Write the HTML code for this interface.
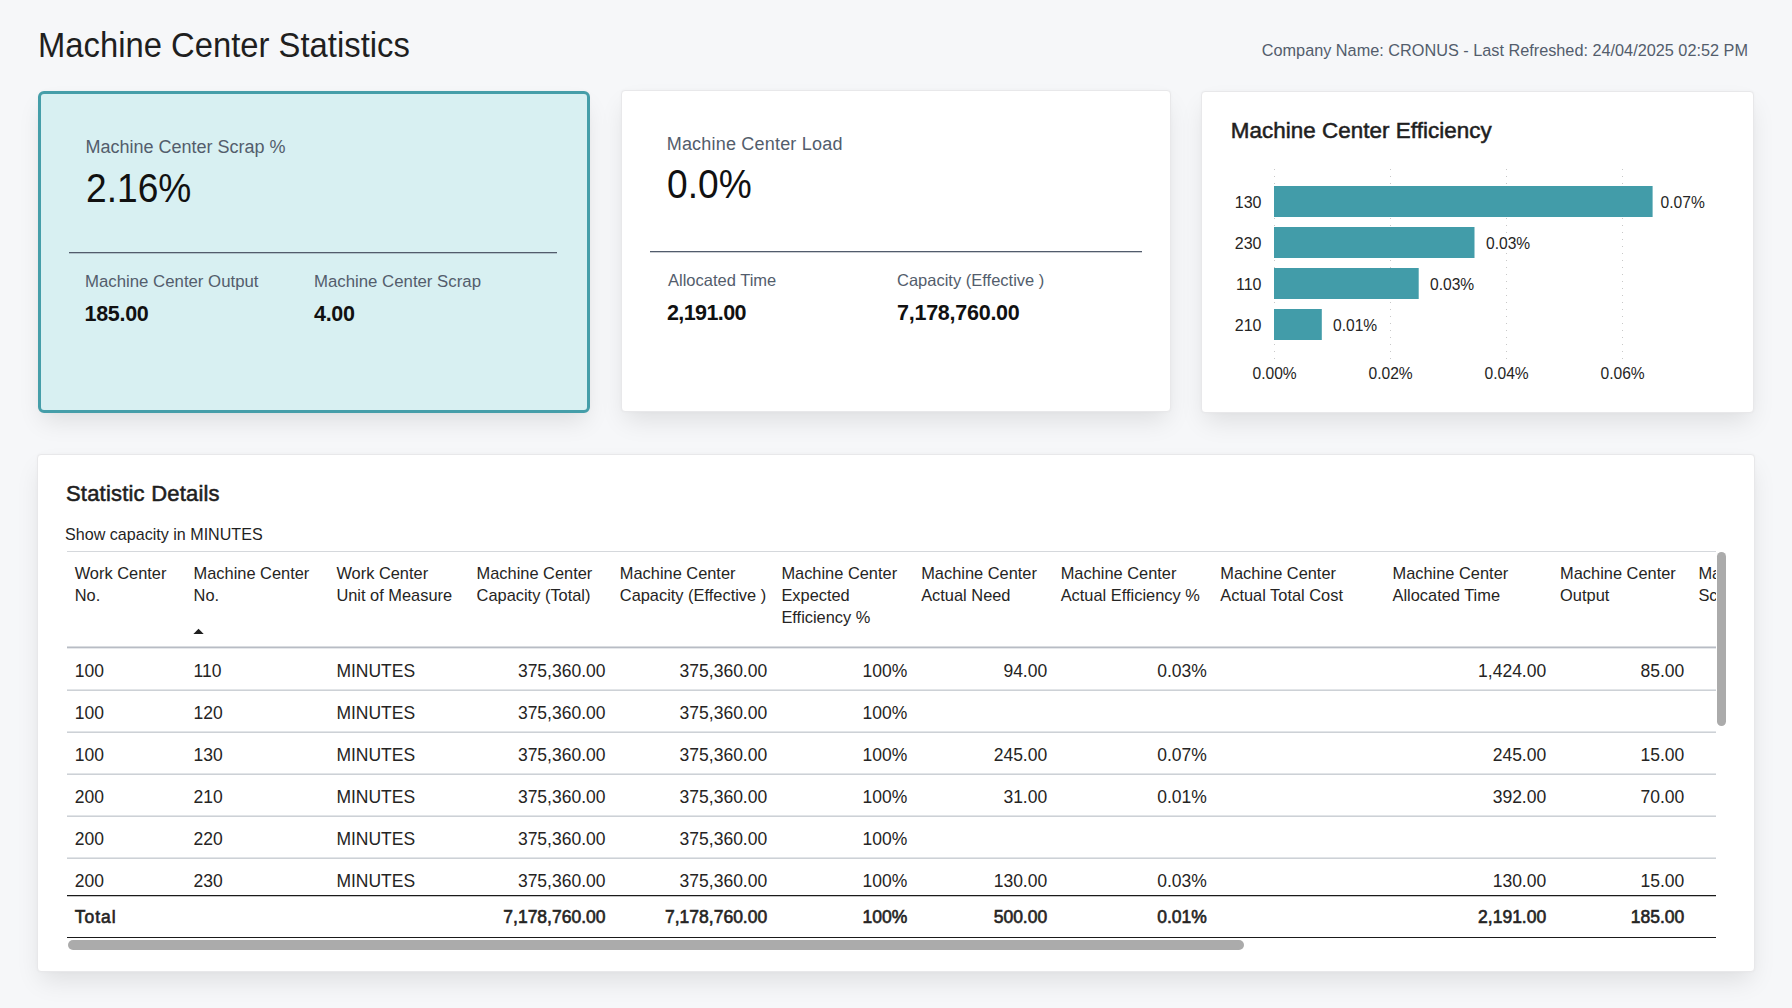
<!DOCTYPE html>
<html><head><meta charset="utf-8">
<style>
html,body{margin:0;padding:0;}
body{width:1792px;height:1008px;overflow:hidden;background:#f6f7f9;font-family:"Liberation Sans",sans-serif;position:relative;color:#252423;}
.a{position:absolute;white-space:nowrap;line-height:1;}
.card{position:absolute;background:#fff;border-radius:4px;box-shadow:0 12px 24px -4px rgba(0,0,0,0.1),0 0 3px rgba(0,0,0,0.03);border:1px solid #e8e8ea;box-sizing:border-box;}
.lbl{color:#535d6c;}
.b{font-weight:bold;}
.tb{-webkit-text-stroke:0.6px currentColor;}
.sb{-webkit-text-stroke:0.55px currentColor;}
.kv{font-weight:bold;font-size:21.5px;letter-spacing:-0.6px;color:#111;}
.line{position:absolute;}
.th{font-size:16.4px;color:#252423;}
.td{font-size:17.5px;color:#252423;}
</style></head>
<body>
<!-- header -->
<div class="a" style="left:38.2px;top:27.2px;font-size:35px;color:#1f1f1f;transform:scaleX(0.937);transform-origin:0 0;">Machine Center Statistics</div>
<div class="a lbl" style="right:44px;top:42.3px;font-size:17.2px;transform:scaleX(0.946);transform-origin:100% 0;">Company Name: CRONUS - Last Refreshed: 24/04/2025 02:52 PM</div>

<!-- card 1 -->
<div class="card" style="left:38px;top:91px;width:552px;height:322px;background:#d8f0f2;border:3px solid #459ea9;border-radius:6px;"></div>
<div class="a lbl" style="left:85.4px;top:137.5px;font-size:18px;">Machine Center Scrap %</div>
<div class="a" style="left:86px;top:167.9px;font-size:40.5px;color:#111;transform:scaleX(0.917);transform-origin:0 0;">2.16%</div>
<div class="line" style="left:69px;top:252px;width:488px;height:1px;background:#525c6c;box-shadow:0 1px 0 rgba(82,92,108,0.3);"></div>
<div class="a lbl" style="left:85px;top:273.5px;font-size:16.8px;">Machine Center Output</div>
<div class="a kv" style="left:84.5px;top:304.4px;letter-spacing:-0.3px;">185.00</div>
<div class="a lbl" style="left:314px;top:273.5px;font-size:16.8px;">Machine Center Scrap</div>
<div class="a kv" style="left:314px;top:304.4px;letter-spacing:-0.3px;">4.00</div>

<!-- card 2 -->
<div class="card" style="left:621px;top:90px;width:550px;height:322px;"></div>
<div class="a lbl" style="left:666.7px;top:134.8px;font-size:18px;letter-spacing:0.2px;">Machine Center Load</div>
<div class="a" style="left:666.5px;top:164.4px;font-size:40.5px;color:#111;transform:scaleX(0.917);transform-origin:0 0;">0.0%</div>
<div class="line" style="left:650px;top:251px;width:492px;height:1px;background:#525c6c;box-shadow:0 1px 0 rgba(82,92,108,0.3);"></div>
<div class="a lbl" style="left:668px;top:272.2px;font-size:16.5px;">Allocated Time</div>
<div class="a kv" style="left:667px;top:302.7px;">2,191.00</div>
<div class="a lbl" style="left:897px;top:272.2px;font-size:16.5px;">Capacity (Effective )</div>
<div class="a kv" style="left:897px;top:302.7px;letter-spacing:-0.25px;">7,178,760.00</div>

<!-- card 3 -->
<div class="card" style="left:1201px;top:91px;width:553px;height:322px;"></div>
<div class="a sb" style="left:1230.8px;top:119.9px;font-size:22.4px;letter-spacing:0.05px;color:#1f1f1f;">Machine Center Efficiency</div>
<svg class="a" style="left:1201px;top:91px;" width="553" height="321" viewBox="1201 91 553 321">
  <g stroke="#c8c8c8" stroke-width="1" stroke-dasharray="1 6">
    <line x1="1274.5" y1="169" x2="1274.5" y2="360"/>
    <line x1="1390.5" y1="169" x2="1390.5" y2="360"/>
    <line x1="1506.5" y1="169" x2="1506.5" y2="360"/>
    <line x1="1622.5" y1="169" x2="1622.5" y2="360"/>
  </g>
  <g fill="#429ca9">
    <rect x="1274" y="186" width="378.6" height="31"/>
    <rect x="1274" y="227" width="200.5" height="31"/>
    <rect x="1274" y="268" width="144.7" height="31"/>
    <rect x="1274" y="309" width="47.8" height="31"/>
  </g>
  <g font-family="Liberation Sans" font-size="16" fill="#252423" text-anchor="end">
    <text x="1261.5" y="208">130</text>
    <text x="1261.5" y="249">230</text>
    <text x="1261.5" y="290">110</text>
    <text x="1261.5" y="331">210</text>
  </g>
  <g font-family="Liberation Sans" font-size="15.6" fill="#252423">
    <text x="1660.6" y="208">0.07%</text>
    <text x="1486" y="249">0.03%</text>
    <text x="1430" y="290">0.03%</text>
    <text x="1333" y="331">0.01%</text>
  </g>
  <g font-family="Liberation Sans" font-size="15.6" fill="#252423" text-anchor="middle">
    <text x="1274.6" y="379">0.00%</text>
    <text x="1390.6" y="379">0.02%</text>
    <text x="1506.6" y="379">0.04%</text>
    <text x="1622.6" y="379">0.06%</text>
  </g>
</svg>

<!-- table card -->
<div class="card" style="left:37px;top:454px;width:1718px;height:518px;"></div>
<div class="a sb" style="left:66px;top:483.1px;font-size:22px;letter-spacing:0.2px;color:#1f1f1f;">Statistic Details</div>
<div class="a" style="left:65px;top:526px;font-size:16.1px;color:#1f1f1f;">Show capacity in MINUTES</div>



<div class="line" style="left:67px;top:551px;width:1649px;height:1px;background:#d5d8dc;"></div>
<div style="position:absolute;left:0;top:0;width:1716px;height:1008px;overflow:hidden;"><div class="a th" style="left:74.7px;top:564.91px;">Work Center</div><div class="a th" style="left:74.7px;top:586.91px;">No.</div><div class="a th" style="left:193.6px;top:564.91px;">Machine Center</div><div class="a th" style="left:193.6px;top:586.91px;">No.</div><div class="a th" style="left:336.4px;top:564.91px;">Work Center</div><div class="a th" style="left:336.4px;top:586.91px;">Unit of Measure</div><div class="a th" style="left:476.6px;top:564.91px;">Machine Center</div><div class="a th" style="left:476.6px;top:586.91px;">Capacity (Total)</div><div class="a th" style="left:619.8px;top:564.91px;">Machine Center</div><div class="a th" style="left:619.8px;top:586.91px;">Capacity (Effective )</div><div class="a th" style="left:781.4px;top:564.91px;">Machine Center</div><div class="a th" style="left:781.4px;top:586.91px;">Expected</div><div class="a th" style="left:781.4px;top:608.91px;">Efficiency %</div><div class="a th" style="left:921.2px;top:564.91px;">Machine Center</div><div class="a th" style="left:921.2px;top:586.91px;">Actual Need</div><div class="a th" style="left:1060.7px;top:564.91px;">Machine Center</div><div class="a th" style="left:1060.7px;top:586.91px;">Actual Efficiency %</div><div class="a th" style="left:1220.3px;top:564.91px;">Machine Center</div><div class="a th" style="left:1220.3px;top:586.91px;">Actual Total Cost</div><div class="a th" style="left:1392.5px;top:564.91px;">Machine Center</div><div class="a th" style="left:1392.5px;top:586.91px;">Allocated Time</div><div class="a th" style="left:1560.1px;top:564.91px;">Machine Center</div><div class="a th" style="left:1560.1px;top:586.91px;">Output</div><div class="a th" style="left:1698.4px;top:564.91px;">Machine Center</div><div class="a th" style="left:1698.4px;top:586.91px;">Scrap</div></div>
<svg class="a" style="left:193px;top:628px;" width="12" height="8"><path d="M0.4 5.9 L5.55 0.8 L10.7 5.9 Z" fill="#1f1f1f"/></svg>
<div class="line" style="left:67px;top:646px;width:1649px;height:1px;background:#d9dce0;"></div>
<div class="line" style="left:67px;top:647px;width:1649px;height:1px;background:#b8bcc4;"></div>
<div class="line" style="left:67px;top:648px;width:1649px;height:1px;background:#e6e8eb;"></div>
<div class="a td" style="left:74.7px;top:662.68px;">100</div>
<div class="a td" style="left:193.6px;top:662.68px;">110</div>
<div class="a td" style="left:336.4px;top:662.68px;">MINUTES</div>
<div class="a td" style="right:1186.5px;top:662.68px;">375,360.00</div>
<div class="a td" style="right:1024.8px;top:662.68px;">375,360.00</div>
<div class="a td" style="right:884.8px;top:662.68px;">100%</div>
<div class="a td" style="right:744.8px;top:662.68px;">94.00</div>
<div class="a td" style="right:585.2px;top:662.68px;">0.03%</div>
<div class="a td" style="right:245.79999999999995px;top:662.68px;">1,424.00</div>
<div class="a td" style="right:107.70000000000005px;top:662.68px;">85.00</div>
<div class="line" style="left:67px;top:689px;width:1649px;height:1px;background:#e2e5e8;"></div>
<div class="line" style="left:67px;top:690px;width:1649px;height:1px;background:#cdd1d6;"></div>
<div class="a td" style="left:74.7px;top:704.68px;">100</div>
<div class="a td" style="left:193.6px;top:704.68px;">120</div>
<div class="a td" style="left:336.4px;top:704.68px;">MINUTES</div>
<div class="a td" style="right:1186.5px;top:704.68px;">375,360.00</div>
<div class="a td" style="right:1024.8px;top:704.68px;">375,360.00</div>
<div class="a td" style="right:884.8px;top:704.68px;">100%</div>
<div class="line" style="left:67px;top:731px;width:1649px;height:1px;background:#e2e5e8;"></div>
<div class="line" style="left:67px;top:732px;width:1649px;height:1px;background:#cdd1d6;"></div>
<div class="a td" style="left:74.7px;top:746.68px;">100</div>
<div class="a td" style="left:193.6px;top:746.68px;">130</div>
<div class="a td" style="left:336.4px;top:746.68px;">MINUTES</div>
<div class="a td" style="right:1186.5px;top:746.68px;">375,360.00</div>
<div class="a td" style="right:1024.8px;top:746.68px;">375,360.00</div>
<div class="a td" style="right:884.8px;top:746.68px;">100%</div>
<div class="a td" style="right:744.8px;top:746.68px;">245.00</div>
<div class="a td" style="right:585.2px;top:746.68px;">0.07%</div>
<div class="a td" style="right:245.79999999999995px;top:746.68px;">245.00</div>
<div class="a td" style="right:107.70000000000005px;top:746.68px;">15.00</div>
<div class="line" style="left:67px;top:773px;width:1649px;height:1px;background:#e2e5e8;"></div>
<div class="line" style="left:67px;top:774px;width:1649px;height:1px;background:#cdd1d6;"></div>
<div class="a td" style="left:74.7px;top:788.68px;">200</div>
<div class="a td" style="left:193.6px;top:788.68px;">210</div>
<div class="a td" style="left:336.4px;top:788.68px;">MINUTES</div>
<div class="a td" style="right:1186.5px;top:788.68px;">375,360.00</div>
<div class="a td" style="right:1024.8px;top:788.68px;">375,360.00</div>
<div class="a td" style="right:884.8px;top:788.68px;">100%</div>
<div class="a td" style="right:744.8px;top:788.68px;">31.00</div>
<div class="a td" style="right:585.2px;top:788.68px;">0.01%</div>
<div class="a td" style="right:245.79999999999995px;top:788.68px;">392.00</div>
<div class="a td" style="right:107.70000000000005px;top:788.68px;">70.00</div>
<div class="line" style="left:67px;top:815px;width:1649px;height:1px;background:#e2e5e8;"></div>
<div class="line" style="left:67px;top:816px;width:1649px;height:1px;background:#cdd1d6;"></div>
<div class="a td" style="left:74.7px;top:830.68px;">200</div>
<div class="a td" style="left:193.6px;top:830.68px;">220</div>
<div class="a td" style="left:336.4px;top:830.68px;">MINUTES</div>
<div class="a td" style="right:1186.5px;top:830.68px;">375,360.00</div>
<div class="a td" style="right:1024.8px;top:830.68px;">375,360.00</div>
<div class="a td" style="right:884.8px;top:830.68px;">100%</div>
<div class="line" style="left:67px;top:857px;width:1649px;height:1px;background:#e2e5e8;"></div>
<div class="line" style="left:67px;top:858px;width:1649px;height:1px;background:#cdd1d6;"></div>
<div class="a td" style="left:74.7px;top:872.68px;">200</div>
<div class="a td" style="left:193.6px;top:872.68px;">230</div>
<div class="a td" style="left:336.4px;top:872.68px;">MINUTES</div>
<div class="a td" style="right:1186.5px;top:872.68px;">375,360.00</div>
<div class="a td" style="right:1024.8px;top:872.68px;">375,360.00</div>
<div class="a td" style="right:884.8px;top:872.68px;">100%</div>
<div class="a td" style="right:744.8px;top:872.68px;">130.00</div>
<div class="a td" style="right:585.2px;top:872.68px;">0.03%</div>
<div class="a td" style="right:245.79999999999995px;top:872.68px;">130.00</div>
<div class="a td" style="right:107.70000000000005px;top:872.68px;">15.00</div>
<div class="line" style="left:67px;top:895px;width:1649px;height:1px;background:#1a1a1a;"></div>
<div class="line" style="left:67px;top:896px;width:1649px;height:1px;background:#c4c4c4;"></div>
<div class="a td tb" style="left:74.7px;top:909.18px;font-size:17.5px;letter-spacing:1px;">Total</div>
<div class="a td tb" style="right:1186.5px;top:909.18px;font-size:17.5px;">7,178,760.00</div>
<div class="a td tb" style="right:1024.8px;top:909.18px;font-size:17.5px;">7,178,760.00</div>
<div class="a td tb" style="right:884.8px;top:909.18px;font-size:17.5px;">100%</div>
<div class="a td tb" style="right:744.8px;top:909.18px;font-size:17.5px;">500.00</div>
<div class="a td tb" style="right:585.2px;top:909.18px;font-size:17.5px;">0.01%</div>
<div class="a td tb" style="right:245.79999999999995px;top:909.18px;font-size:17.5px;">2,191.00</div>
<div class="a td tb" style="right:107.70000000000005px;top:909.18px;font-size:17.5px;">185.00</div>
<div class="line" style="left:67px;top:937px;width:1649px;height:1px;background:#1a1a1a;"></div>
<div class="line" style="left:68px;top:940px;width:1176px;height:9.5px;border-radius:5px;background:#ababab;"></div>
<div class="line" style="left:1717px;top:552px;width:9px;height:173.5px;border-radius:5px;background:#ababab;"></div>
</body></html>
